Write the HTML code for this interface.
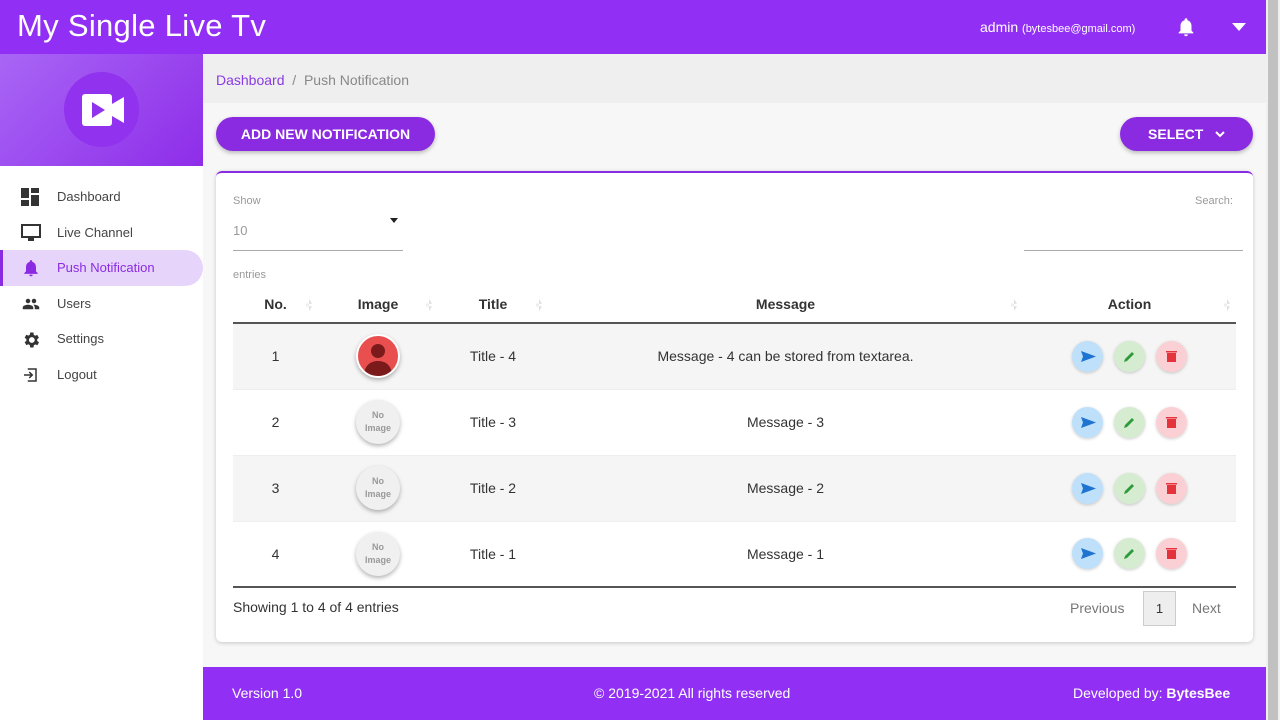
<!DOCTYPE html>
<html><head><meta charset="utf-8"><style>
*{box-sizing:border-box;margin:0;padding:0}
body{width:1280px;height:720px;overflow:hidden;font-family:"Liberation Sans",sans-serif;background:#f7f7f7;position:relative;color:#333}
.hdr{position:absolute;left:0;top:0;width:1266px;height:54px;background:#9130f4;color:#fff}
.hdr .t{position:absolute;left:17px;top:8px;font-size:31px;letter-spacing:.3px}
.hdr .u{position:absolute;left:980px;top:19px;font-size:14px}
.hdr .u small{font-size:11px}
.side{position:absolute;left:0;top:54px;width:203px;height:666px;background:#fff}
.side .top{height:112px;background:linear-gradient(135deg,#a866f5,#8e2de9)}
.logo{position:absolute;left:64px;top:18px;width:75px;height:75px;border-radius:50%;background:#9132ee}
.nav{position:absolute;left:0;top:125px;width:203px}
.nav div{height:35.5px;display:flex;align-items:center;padding-left:57px;font-size:13px;color:#444;position:relative}
.nav div svg{position:absolute;left:21px;top:9px}
.nav .act{background:#e6d4fb;color:#8a2be2;border-radius:0 18px 18px 0;border-left:3px solid #8a2be2;padding-left:54px}
.bc{position:absolute;left:203px;top:54px;width:1063px;height:49px;background:#efefef;font-size:14px;color:#888;padding:18px 13px}
.bc a{color:#8a3be2}
.btn{position:absolute;height:34px;border-radius:17px;background:#8a2be2;color:#fff;font-size:14px;font-weight:bold;display:flex;align-items:center;justify-content:center;box-shadow:0 2px 4px rgba(0,0,0,.25)}
.card{position:absolute;left:216px;top:171px;width:1037px;height:471px;background:#fff;border-top:2px solid #8a2be2;border-radius:6px;box-shadow:0 1px 4px rgba(0,0,0,.2)}
.sm{font-size:11px;color:#999;position:absolute}
table{position:absolute;left:17px;top:113px;width:1003px;border-collapse:collapse;font-size:14px}
th{height:37px;font-weight:bold;border-bottom:2px solid #555;text-align:center;position:relative}
th:after{content:"";position:absolute;right:6px;top:13px;width:6px;height:12px;background:linear-gradient(#ddd 45%,transparent 45%,transparent 55%,#ddd 55%);clip-path:polygon(50% 0,100% 40%,0 40%,0 60%,100% 60%,50% 100%)}
td{height:66px;text-align:center;border-top:1px solid #eee}
tr.g td{background:#f5f5f5}
tbody tr:last-child td{border-bottom:2px solid #555}
.av{display:inline-block;width:44px;height:44px;border-radius:50%;background:#f0f0f0;box-shadow:0 2px 4px rgba(0,0,0,.3);font-size:9px;font-weight:bold;color:#999;line-height:13px;padding-top:9px;vertical-align:middle}
.ab{display:inline-block;width:31px;height:31px;border-radius:50%;margin:0 5.5px;vertical-align:middle;box-shadow:0 1px 3px rgba(0,0,0,.2);position:relative}
.ft{position:absolute;left:203px;top:667px;width:1063px;height:53px;background:#9130f4;color:#fff;font-size:14px}
.sb{position:absolute;left:1266px;top:0;width:14px;height:720px;background:#f0f0f0}
.sb div{position:absolute;left:2px;top:0;width:10px;height:720px;background:#c1c1c1}
</style></head><body>
<div class="hdr"><div class="t">My Single Live Tv</div><div class="u">admin <small>(bytesbee@gmail.com)</small></div>
<svg style="position:absolute;left:1175px;top:15px" width="22" height="24" viewBox="0 0 24 24"><path fill="#fff" d="M12 22a2 2 0 0 0 2-2h-4a2 2 0 0 0 2 2zm6-6V11c0-3-1.6-5.6-4.5-6.3V4a1.5 1.5 0 0 0-3 0v.7C7.6 5.4 6 8 6 11v5l-2 2v1h16v-1z"/></svg>
<svg style="position:absolute;left:1232px;top:23px" width="14" height="8"><path d="M0 0h14L7 8z" fill="#fff"/></svg></div>
<div class="side"><div class="top"><div class="logo"><svg style="position:absolute;left:18px;top:22px" width="42" height="32" viewBox="0 0 42 32"><rect x="0" y="0" width="30" height="32" rx="3" fill="#fff"/><path d="M30 10l12-7v26l-12-7z" fill="#fff"/><path d="M10 8v16l13-8z" fill="#9132ee"/></svg></div></div>
<div class="nav">
<div><svg width="18" height="18"><rect x="0" y="0" width="8" height="10" fill="#333"/><rect x="10" y="0" width="8" height="5" fill="#333"/><rect x="0" y="12" width="8" height="6" fill="#333"/><rect x="10" y="7" width="8" height="11" fill="#333"/></svg>Dashboard</div>
<div><svg width="20" height="18"><rect x="1" y="1" width="18" height="12" fill="none" stroke="#333" stroke-width="2"/><rect x="7" y="14" width="6" height="3" fill="#333"/></svg>Live Channel</div>
<div class="act"><svg width="20" height="20" viewBox="0 0 24 24" style="left:18px;top:8px"><path fill="#8a2be2" d="M12 22a2 2 0 0 0 2-2h-4a2 2 0 0 0 2 2zm6-6V11c0-3-1.6-5.6-4.5-6.3V4a1.5 1.5 0 0 0-3 0v.7C7.6 5.4 6 8 6 11v5l-2 2v1h16v-1z"/></svg>Push Notification</div>
<div><svg width="20" height="18" viewBox="0 0 24 24"><path fill="#333" d="M16 11a3 3 0 1 0 0-6 3 3 0 0 0 0 6zm-8 0a3 3 0 1 0 0-6 3 3 0 0 0 0 6zm0 2c-2.3 0-7 1.2-7 3.5V19h14v-2.5C15 14.2 10.3 13 8 13zm8 0c-.3 0-.6 0-1 .1 1.2.8 2 2 2 3.4V19h6v-2.5c0-2.3-4.7-3.5-7-3.5z"/></svg>Users</div>
<div><svg width="20" height="20" viewBox="0 0 24 24"><path fill="#333" d="M19.4 13a7.5 7.5 0 0 0 0-2l2.1-1.6-2-3.5-2.5 1a7.3 7.3 0 0 0-1.7-1L15 3h-4l-.4 2.7a7.3 7.3 0 0 0-1.7 1l-2.5-1-2 3.5L6.5 11a7.5 7.5 0 0 0 0 2l-2.1 1.6 2 3.5 2.5-1a7.3 7.3 0 0 0 1.7 1L11 21h4l.4-2.7a7.3 7.3 0 0 0 1.7-1l2.5 1 2-3.5zM13 15.5a3.5 3.5 0 1 1 0-7 3.5 3.5 0 0 1 0 7z"/></svg>Settings</div>
<div><svg width="18" height="18" viewBox="0 0 24 24"><path fill="none" stroke="#333" stroke-width="2" d="M9 4h11v16H9M4 12h11M11 8l4 4-4 4"/></svg>Logout</div>
</div></div>
<div class="bc"><a>Dashboard</a> &nbsp;/&nbsp; Push Notification</div>
<div class="btn" style="left:216px;top:117px;width:219px">ADD NEW NOTIFICATION</div>
<div class="btn" style="left:1120px;top:117px;width:133px">SELECT &nbsp;&nbsp;<svg width="10" height="7"><path d="M1 1l4 4 4-4" stroke="#fff" stroke-width="2" fill="none"/></svg></div>
<div class="card">
<div class="sm" style="left:17px;top:22px">Show</div>
<div class="sm" style="left:17px;top:50px;font-size:13px">10</div>
<svg style="position:absolute;left:174px;top:45px" width="8" height="5"><path d="M0 0h8L4 5z" fill="#222"/></svg>
<div style="position:absolute;left:17px;top:77px;width:170px;border-top:1px solid #aaa"></div>
<div class="sm" style="left:979px;top:22px">Search:</div>
<div style="position:absolute;left:808px;top:77px;width:219px;border-top:1px solid #aaa"></div>
<div class="sm" style="left:17px;top:96px">entries</div>
<table><thead><tr><th style="width:85px">No.</th><th style="width:120px">Image</th><th style="width:110px">Title</th><th style="width:475px">Message</th><th>Action</th></tr></thead>
<tbody>
<tr class="g"><td>1</td><td><span class="av" style="background:#e94f4f;padding:0;overflow:hidden;border:2px solid #fff"><svg width="40" height="40" viewBox="0 0 40 40"><circle cx="20" cy="15" r="7" fill="#7a1a1a"/><path d="M6 40c0-10 6-15 14-15s14 5 14 15z" fill="#7a1a1a"/></svg></span></td><td>Title - 4</td><td>Message - 4 can be stored from textarea.</td><td>A</td></tr>
<tr><td>2</td><td><span class="av">No<br>Image</span></td><td>Title - 3</td><td>Message - 3</td><td>A</td></tr>
<tr class="g"><td>3</td><td><span class="av">No<br>Image</span></td><td>Title - 2</td><td>Message - 2</td><td>A</td></tr>
<tr><td>4</td><td><span class="av">No<br>Image</span></td><td>Title - 1</td><td>Message - 1</td><td>A</td></tr>
</tbody></table>
<div style="position:absolute;left:17px;top:426px;font-size:14px">Showing 1 to 4 of 4 entries</div>
<div style="position:absolute;left:854px;top:427px;font-size:14px;color:#777">Previous</div>
<div style="position:absolute;left:927px;top:418px;width:33px;height:35px;border:1px solid #ccc;background:#eee;font-size:13px;text-align:center;line-height:33px">1</div>
<div style="position:absolute;left:976px;top:427px;font-size:14px;color:#777">Next</div>
</div>
<div class="ft"><span style="position:absolute;left:29px;top:18px">Version 1.0</span><span style="position:absolute;left:391px;top:18px">© 2019-2021 All rights reserved</span><span style="position:absolute;left:870px;top:18px">Developed by: <b>BytesBee</b></span></div>
<div class="sb"><div></div></div>
<script>
document.querySelectorAll('tbody td:last-child').forEach(function(td){td.innerHTML='<span class="ab" style="background:#bfe0fb"><svg width="31" height="31"><path d="M9 10l15 5.5L9 21l2-5.5z" fill="#1e74d0"/></svg></span><span class="ab" style="background:#d5ecd0"><svg width="31" height="31"><path d="M10 21l1-3 7-7 2 2-7 7z" fill="#2e9a3a"/></svg></span><span class="ab" style="background:#fbd0d4"><svg width="31" height="31"><path d="M11 12h9v9h-9zM10 10h11v1.5H10z" fill="#e5333b"/></svg></span>'});
</script>
</body></html>
